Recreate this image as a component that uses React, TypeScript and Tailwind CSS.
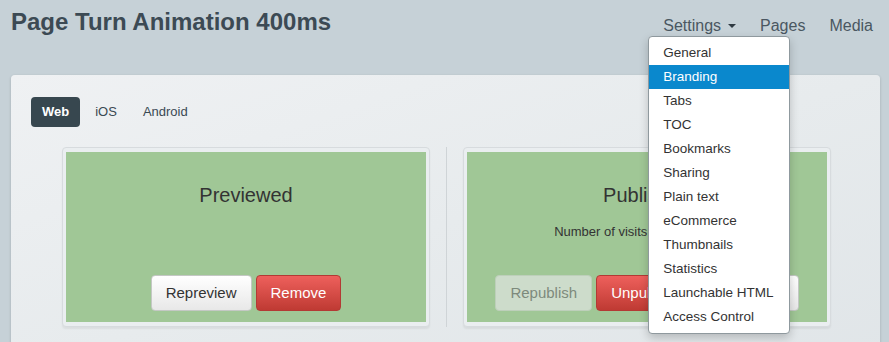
import React from 'react';

const menuItems = [
  'General',
  'Branding',
  'Tabs',
  'TOC',
  'Bookmarks',
  'Sharing',
  'Plain text',
  'eCommerce',
  'Thumbnails',
  'Statistics',
  'Launchable HTML',
  'Access Control',
];

const btn = 'flex h-9 items-center rounded-[4px] border px-[14px] text-[15px]';
const btnDefault = `${btn} border-[#c4c8c4] bg-gradient-to-b from-white to-[#e8e8e8] text-[#333]`;
const btnDanger = `${btn} border-[#b33a34] bg-gradient-to-b from-[#ee605c] to-[#bf3a33] text-white`;
const btnDisabled = `${btn} border-[#bdcfba] bg-[#cddccb] text-[#7d8a7c]`;

function Card({ children }: { children: React.ReactNode }) {
  return (
    <div className="w-[368px] rounded-[4px] border border-[#d7dbde] bg-[#eaeef0] px-[3px] py-1 shadow-[0_2px_2px_rgba(0,0,0,0.06)]">
      <div className="flex h-[170px] flex-col items-center bg-[#a0c796] pb-[11px] pt-[31px] text-[#333]">
        {children}
      </div>
    </div>
  );
}

export default function App() {
  return (
    <div className="h-[342px] w-[889px] overflow-hidden bg-[#c6d1d7] font-['Liberation_Sans',Arial,sans-serif]">
      {/* Header */}
      <div className="flex h-[75px] items-start justify-between pl-[11px] pr-[4px]">
        <h1 className="pt-[8px] text-[24px] font-bold leading-[28px] text-[#3c4a54]">
          Page Turn Animation 400ms
        </h1>
        <nav className="flex pt-[16px] text-[16px] leading-5 text-[#4a5761]">
          <div className="relative z-10 flex items-center px-3">
            <span>Settings</span>
            <span className="ml-[7px] inline-block h-0 w-0 border-x-4 border-t-4 border-x-transparent border-t-[#2f3a42]" />
            <ul className="absolute left-[-3px] top-[20px] w-[142px] rounded-[4px] border border-[#8f999e] bg-white py-1 text-[13.5px] text-[#333] shadow-[0_4px_10px_rgba(0,0,0,0.2)]">
              {menuItems.map((item) => (
                <li
                  key={item}
                  className={`flex h-6 items-center whitespace-nowrap px-[14px] ${
                    item === 'Branding' ? 'bg-[#0a88cd] text-white' : ''
                  }`}
                >
                  {item}
                </li>
              ))}
            </ul>
          </div>
          <div className="px-3">Pages</div>
          <div className="px-3">Media</div>
        </nav>
      </div>

      {/* Panel */}
      <div className="ml-[11px] mr-[9px] h-[300px] rounded-[4px] bg-gradient-to-br from-[#eff1f3] via-[#e7ebed] to-[#e0e5e8] px-5 pt-[22px] shadow-[0_1px_3px_rgba(0,0,0,0.18)]">
        <div className="flex gap-1 text-[13px] leading-[30px] text-[#3a4953]">
          <span className="h-[30px] rounded-[4px] bg-[#37474f] px-[11px] font-bold text-white">Web</span>
          <span className="px-[11px]">iOS</span>
          <span className="px-[11px]">Android</span>
        </div>

        <div className="mt-5 flex gap-4 pl-[31px]">
          <Card>
            <div className="text-[20px] leading-6">Previewed</div>
            <div className="mt-auto flex gap-1">
              <button type="button" className={btnDefault}>Repreview</button>
              <button type="button" className={btnDanger}>Remove</button>
            </div>
          </Card>

          <div className="w-px bg-[#cfd4d7]" />

          <Card>
            <div className="text-[20px] leading-6">Published</div>
            <div className="mt-4 text-[13px] leading-[18px]">Number of visits this month: 128</div>
            <div className="mt-auto flex gap-1">
              <button type="button" className={btnDisabled}>Republish</button>
              <button type="button" className={btnDanger}>Unpublish</button>
              <button type="button" className={btnDefault}>Share Link</button>
            </div>
          </Card>
        </div>
      </div>
    </div>
  );
}
